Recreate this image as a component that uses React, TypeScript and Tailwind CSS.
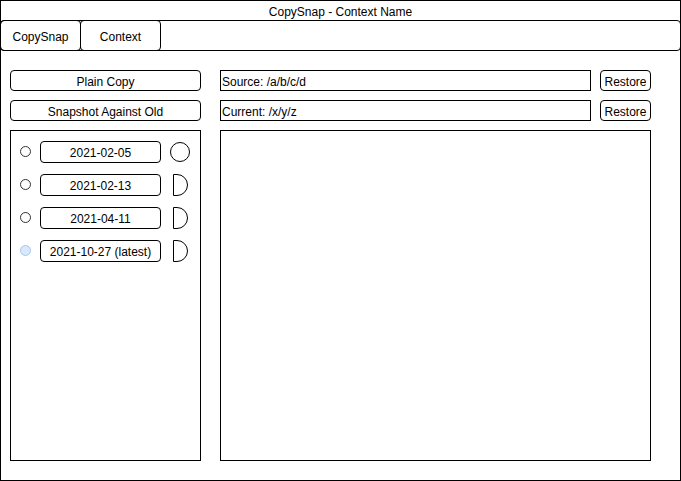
import React from "react";

const font = { fontFamily: '"Liberation Sans", Arial, sans-serif' };

function HalfD() {
  return (
    <svg width="20" height="22" viewBox="0 0 20 22" className="shrink-0">
      <path d="M3.5 0.5 L3.5 21.5 L7 21.5 A10.5 10.5 0 0 0 7 0.5 Z" fill="white" stroke="black" strokeWidth="1" />
    </svg>
  );
}

function Full() {
  return (
    <svg width="20" height="22" viewBox="0 0 20 22" className="shrink-0">
      <circle cx="10" cy="11" r="9.5" fill="white" stroke="black" strokeWidth="1" />
    </svg>
  );
}

function Row({ date, last, shape }: { date: string; last?: boolean; shape: "full" | "half" }) {
  return (
    <div className="flex items-center h-[21px]">
      <div className="w-[29px] flex justify-end pr-[9px]">
        <div
          className={
            "w-[11px] h-[11px] rounded-full border " +
            (last ? "bg-[#dae8fc] border-[#a9c4eb]" : "bg-white border-[#333333]")
          }
        />
      </div>
      <div className="w-[121px] h-[22px] pt-[2px] border border-black rounded-[4px] flex items-center justify-center text-[12px] text-black">
        {date}
      </div>
      <div className="ml-[9px]">{shape === "full" ? <Full /> : <HalfD />}</div>
    </div>
  );
}

export default function App() {
  return (
    <div
      className="w-[681px] h-[481px] border border-black bg-white flex flex-col text-[12px] text-black overflow-hidden"
      style={font}
    >
      <div className="h-[19px] flex items-center justify-center pt-[3px]">CopySnap - Context Name</div>
      <div className="-mx-px h-[31px] border border-black rounded-[4px] flex">
        <div className="-ml-px -my-px w-[81px] h-[31px] pt-[2px] border border-black rounded-[4px] flex items-center justify-center">
          CopySnap
        </div>
        <div className="-ml-px -my-px w-[81px] h-[31px] pt-[2px] border border-black rounded-[4px] flex items-center justify-center">
          Context
        </div>
      </div>
      <div className="pt-[19px] pl-[9px] grid grid-cols-[191px_431px] gap-x-[19px]">
        <div className="flex flex-col gap-[9px]">
          <div className="h-[21px] pt-[2px] border border-black rounded-[4px] flex items-center justify-center">Plain Copy</div>
          <div className="h-[21px] pt-[2px] border border-black rounded-[4px] flex items-center justify-center">
            Snapshot Against Old
          </div>
          <div className="h-[331px] border border-black pt-[10px] flex flex-col gap-[12px]">
            <Row date="2021-02-05" shape="full" />
            <Row date="2021-02-13" shape="half" />
            <Row date="2021-04-11" shape="half" />
            <Row date="2021-10-27 (latest)" shape="half" last />
          </div>
        </div>
        <div className="flex flex-col gap-[9px]">
          <div className="flex gap-[9px]">
            <div className="w-[371px] h-[21px] pt-[2px] border border-black flex items-center pl-[1px]">Source: /a/b/c/d</div>
            <div className="w-[51px] h-[21px] pt-[2px] border border-black rounded-[4px] flex items-center justify-center">
              Restore
            </div>
          </div>
          <div className="flex gap-[9px]">
            <div className="w-[371px] h-[21px] pt-[2px] border border-black flex items-center pl-[1px]">Current: /x/y/z</div>
            <div className="w-[51px] h-[21px] pt-[2px] border border-black rounded-[4px] flex items-center justify-center">
              Restore
            </div>
          </div>
          <div className="h-[331px] border border-black" />
        </div>
      </div>
    </div>
  );
}
